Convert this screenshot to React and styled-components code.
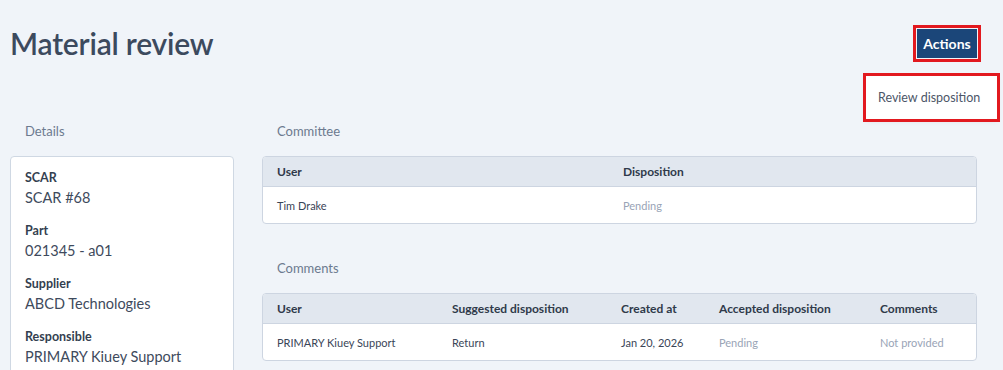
import React from 'react';
import styled, { createGlobalStyle } from 'styled-components';

const GlobalStyle = createGlobalStyle`
  body {
    margin: 0;
    background: #f0f4f9;
    font-family: Lato, "Open Sans", sans-serif;
    color: #343f50;
  }
`;

const details = [
  { label: 'SCAR', value: 'SCAR #68' },
  { label: 'Part', value: '021345 - a01' },
  { label: 'Supplier', value: 'ABCD Technologies' },
  { label: 'Responsible', value: 'PRIMARY Kiuey Support' },
];

const committeeCols = [
  { title: 'User', width: '346px' },
  { title: 'Disposition', width: 'auto' },
];

const commentCols = [
  { title: 'User', width: '175px' },
  { title: 'Suggested disposition', width: '169px' },
  { title: 'Created at', width: '98px' },
  { title: 'Accepted disposition', width: '161px' },
  { title: 'Comments', width: 'auto' },
];

export default function App() {
  return (
    <Page>
      <GlobalStyle />
      <Header>
        <Title>Material review</Title>
        <ActionsWrap>
          <ActionsButton>Actions</ActionsButton>
          <Menu>
            <MenuItem>Review disposition</MenuItem>
          </Menu>
        </ActionsWrap>
      </Header>

      <Main>
        <Column>
          <SectionLabel>Details</SectionLabel>
          <Card>
            {details.map((d) => (
              <Field key={d.label}>
                <FieldLabel>{d.label}</FieldLabel>
                <FieldValue>{d.value}</FieldValue>
              </Field>
            ))}
          </Card>
        </Column>

        <Column>
          <SectionLabel>Committee</SectionLabel>
          <Table>
            <colgroup>
              {committeeCols.map((c) => <col key={c.title} style={{ width: c.width }} />)}
            </colgroup>
            <thead>
              <tr>
                {committeeCols.map((c) => <Th key={c.title}>{c.title}</Th>)}
              </tr>
            </thead>
            <tbody>
              <tr>
                <Td>Tim Drake</Td>
                <Td $muted>Pending</Td>
              </tr>
            </tbody>
          </Table>

          <SectionLabel $spaced>Comments</SectionLabel>
          <Table>
            <colgroup>
              {commentCols.map((c) => <col key={c.title} style={{ width: c.width }} />)}
            </colgroup>
            <thead>
              <tr>
                {commentCols.map((c) => <Th key={c.title}>{c.title}</Th>)}
              </tr>
            </thead>
            <tbody>
              <tr>
                <Td>PRIMARY Kiuey Support</Td>
                <Td>Return</Td>
                <Td>Jan 20, 2026</Td>
                <Td $muted>Pending</Td>
                <Td $muted>Not provided</Td>
              </tr>
            </tbody>
          </Table>
        </Column>
      </Main>
    </Page>
  );
}

const Page = styled.div`
  padding: 21px 26px 0 10px;
  height: 370px;
  overflow: hidden;
  box-sizing: border-box;
`;

const Header = styled.div`
  display: flex;
  justify-content: space-between;
  align-items: center;
  height: 44px;
`;

const Title = styled.h1`
  margin: 0;
  font-size: 30px;
  font-weight: 600;
  color: #3c4a5e;
  letter-spacing: -0.2px;
`;

const ActionsWrap = styled.div`
  position: relative;
`;

const ActionsButton = styled.button`
  background: #1b4679;
  color: #ffffff;
  border: none;
  outline: 3px solid #e2191f;
  outline-offset: 1px;
  width: 60px;
  height: 29px;
  padding: 0;
  font-family: Lato, "Open Sans", sans-serif;
  font-size: 14px;
  font-weight: 700;
  cursor: pointer;
`;

const Menu = styled.div`
  position: absolute;
  top: 47px;
  right: -20px;
  width: 131px;
  height: 43px;
  background: #ffffff;
  outline: 3px solid #e2191f;
  display: flex;
  align-items: center;
  padding-left: 12px;
  box-sizing: border-box;
  box-shadow: 0 2px 6px rgba(0, 0, 0, 0.08);
`;

const MenuItem = styled.div`
  font-size: 12.5px;
  color: #4c5668;
  white-space: nowrap;
`;

const Main = styled.div`
  display: grid;
  grid-template-columns: 224px 715px;
  gap: 28px;
  margin-top: 55px;
`;

const Column = styled.div`
  display: flex;
  flex-direction: column;
`;

const SectionLabel = styled.div`
  font-size: 13px;
  color: #6c7a8f;
  padding-left: 15px;
  height: 22px;
  line-height: 22px;
  margin-top: ${(p) => (p.$spaced ? '33px' : '0')};
  margin-bottom: 14px;
`;

const Card = styled.div`
  background: #ffffff;
  border: 1px solid #cfd8e3;
  border-radius: 4px;
  padding: 12px 14px 10px;
  display: flex;
  flex-direction: column;
  gap: 13px;
  min-height: 240px;
`;

const Field = styled.div`
  display: flex;
  flex-direction: column;
`;

const FieldLabel = styled.div`
  font-size: 12.5px;
  font-weight: 700;
  color: #343f50;
  line-height: 18px;
`;

const FieldValue = styled.div`
  font-size: 14.5px;
  color: #3e4a5c;
  line-height: 22px;
`;

const Table = styled.table`
  width: 100%;
  table-layout: fixed;
  border-collapse: separate;
  border-spacing: 0;
  background: #ffffff;
  border: 1px solid #cdd5e1;
  border-radius: 4px;
  overflow: hidden;
  font-size: 12px;
`;

const Th = styled.th`
  background: #e1e7ef;
  text-align: left;
  font-weight: 700;
  color: #2f3a4a;
  height: 29px;
  padding: 0 14px;
  border-bottom: 1px solid #cdd5e1;
`;

const Td = styled.td`
  height: 36px;
  padding: 0 14px;
  font-size: 11px;
  color: ${(p) => (p.$muted ? '#99a4b6' : '#3a4557')};
`;
